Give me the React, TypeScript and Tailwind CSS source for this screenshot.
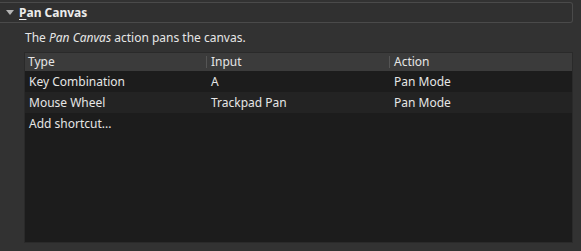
const rows = [
  { type: 'Key Combination', input: 'A', action: 'Pan Mode' },
  { type: 'Mouse Wheel', input: 'Trackpad Pan', action: 'Pan Mode' },
];

export default function App() {
  return (
    <div
      className="w-[581px] h-[251px] bg-[#323232] text-[12px] text-[#e6e6e6] overflow-hidden"
      style={{ fontFamily: '"Noto Sans", "Open Sans", sans-serif' }}
    >
      <div className="pt-[2px] pr-[8px]">
        <div className="h-[21px] flex items-center border-t border-b border-r border-[#4a4a4a] rounded-r-[3px] bg-[#303030]">
          <svg width="8" height="5" viewBox="0 0 8 5" className="ml-[6px]">
            <path d="M0 0 L8 0 L4 5 Z" fill="#b4b4b4" />
          </svg>
          <span className="ml-[5px] font-bold text-[#ececec]">
            <span className="underline underline-offset-2">P</span>an Canvas
          </span>
        </div>
      </div>
      <div className="pl-[25px] pt-[5px] h-[29px] leading-[20px]">
        The <i>Pan Canvas</i> action pans the canvas.
      </div>
      <div className="ml-[24px] mr-[8px] h-[191px] bg-[#1c1c1c] border border-[#2a2a2a] flex flex-col">
        <div className="h-[18px] bg-[#3b3b3b] flex items-center leading-none">
          <div className="w-[182px] pl-[3px] border-r border-[#555]">Type</div>
          <div className="w-[183px] pl-[4px] border-r border-[#555]">Input</div>
          <div className="pl-[4px]">Action</div>
        </div>
        {rows.map((r, i) => (
          <div
            key={r.type}
            className={`h-[21px] flex items-center ${i % 2 ? 'bg-[#232323]' : 'bg-[#1c1c1c]'}`}
          >
            <div className="w-[182px] pl-[4px]">{r.type}</div>
            <div className="w-[183px] pl-[4px]">{r.input}</div>
            <div className="pl-[4px]">{r.action}</div>
          </div>
        ))}
        <div className="h-[21px] flex items-center pl-[4px]">Add shortcut...</div>
      </div>
    </div>
  );
}
